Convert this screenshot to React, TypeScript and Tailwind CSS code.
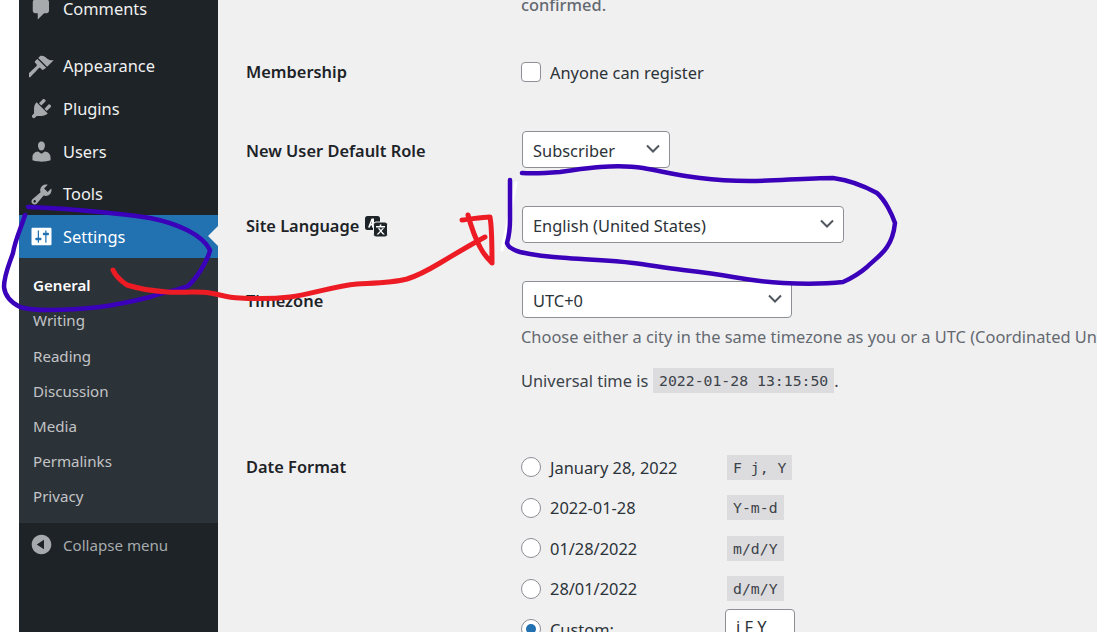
const font = "font-['Noto_Sans',sans-serif]";

const icons = {
  comments: "M5 2h9c1.1 0 2 .9 2 2v7c0 1.1-.9 2-2 2h-2l-5 5v-5H5c-1.1 0-2-.9-2-2V4c0-1.1.9-2 2-2z",
  appearance: "M14.48 11.06L7.41 3.99l1.5-1.5c.5-.56 2.3-.47 3.51.32 1.21.8 1.43 1.28 2.91 2.1 1.18.64 2.45 1.26 4.45.85zm-.71.71L6.7 4.7 4.93 6.47c-.39.39-.39 1.02 0 1.41l1.06 1.06c.39.39.39 1.03 0 1.42-.6.6-6.4 6.11-6.99 6.7-.38.38-.38 1.02 0 1.41l.71.71c.39.39 1.03.39 1.41 0 .6-.6 6.11-6.4 6.7-7 .39-.39 1.03-.39 1.42 0l1.06 1.06c.39.39 1.02.39 1.41 0z",
  plugins: "M13.11 4.36L9.87 7.6 8 5.73l3.24-3.24c.35-.34 1.05-.2 1.56.32.52.51.66 1.21.31 1.55zm-8 1.77l.91-1.12 9.01 9.01-1.19.84c-.71.71-2.63 1.16-3.82 1.16H6.14L4.9 17.26c-.59.59-1.54.59-2.12 0-.59-.58-.59-1.53 0-2.12l1.24-1.24v-3.88c0-1.13.4-3.19 1.09-3.89zm7.26 3.97l3.24-3.24c.34-.35 1.04-.21 1.55.31.52.51.66 1.21.31 1.55l-3.24 3.25z",
  users: "M10 9.25c-2.27 0-2.73-3.44-2.73-3.44C7 4.02 7.82 2 9.97 2c2.16 0 2.98 2.02 2.71 3.81 0 0-.41 3.44-2.68 3.44zm0 2.57L12.72 10c2.39 0 4.52 2.33 4.52 4.53v2.49s-3.65 1.13-7.24 1.13c-3.65 0-7.24-1.13-7.24-1.13v-2.49c0-2.25 1.94-4.48 4.47-4.48z",
  tools: "M16.68 9.77c-1.34 1.34-3.3 1.67-4.95.99l-5.41 6.52c-.99.99-2.59.99-3.58 0s-.99-2.59 0-3.57l6.52-5.42c-.68-1.65-.35-3.61.99-4.95 1.28-1.28 3.12-1.62 4.72-1.06l-2.89 2.89 2.82 2.82 2.86-2.87c.53 1.58.18 3.39-1.08 4.65zM3.81 16.21c.4.39 1.04.39 1.43 0 .4-.4.4-1.04 0-1.43-.39-.4-1.03-.4-1.43 0-.39.39-.39 1.03 0 1.43z",
  settings: "M18 16V4c0-.55-.45-1-1-1H3c-.55 0-1 .45-1 1v12c0 .55.45 1 1 1h14c.55 0 1-.45 1-1zM8 11h1c.55 0 1 .45 1 1s-.45 1-1 1H8v1.5c0 .28-.22.5-.5.5s-.5-.22-.5-.5V13H6c-.55 0-1-.45-1-1s.45-1 1-1h1V5.5c0-.28.22-.5.5-.5s.5.22.5.5V11zm5-2h-1c-.55 0-1-.45-1-1s.45-1 1-1h1V5.5c0-.28.22-.5.5-.5s.5.22.5.5V7h1c.55 0 1 .45 1 1s-.45 1-1 1h-1v5.5c0 .28-.22.5-.5.5s-.5-.22-.5-.5V9z",
  collapse: "M10 2.16c4.33 0 7.84 3.51 7.84 7.84s-3.51 7.84-7.84 7.84S2.16 14.33 2.16 10 5.71 2.16 10 2.16zm2 11.72V6.12L6.18 9.97z",
};

function Dash({ d, className }: { d: string; className: string }) {
  return (
    <svg viewBox="0 0 20 20" className={className} fill="currentColor" aria-hidden="true">
      <path d={d} />
    </svg>
  );
}

function NavItem({ icon, label, h, nudge = true }: { icon: string; label: string; h: string; nudge?: boolean }) {
  return (
    <div className={`flex items-center pl-[10px] shrink-0 ${h}`}>
      <Dash d={icon} className="w-[25px] h-[25px] text-[#a7aaad] shrink-0" />
      <span className={`ml-[9px] text-[#f0f0f1] ${nudge ? "pt-[2px]" : ""}`}>{label}</span>
    </div>
  );
}

function Chevron() {
  return (
    <svg viewBox="0 0 14 9" className="w-[14px] h-[9px] -mt-[2px] text-[#50575e] shrink-0" fill="none" stroke="currentColor" strokeWidth="2">
      <path d="M1 1.5l6 6 6-6" />
    </svg>
  );
}

function Select({ value, w }: { value: string; w: string }) {
  return (
    <div className={`flex items-center justify-between h-[37px] ml-px pl-[10px] pr-[9px] bg-white border border-[#8c8f94] rounded-[4px] text-[#2c3338] ${w}`}>
      <span className="pt-[4px]">{value}</span>
      <Chevron />
    </div>
  );
}

function Code({ children }: { children: string }) {
  return (
    <code className="inline-block h-[25px] leading-[25px] px-[6px] bg-[#dcdcde] text-[#3c434a] text-[14.8px] font-['DejaVu_Sans_Mono',monospace] whitespace-pre">
      {children}
    </code>
  );
}

function DateRow({ label, code, checked }: { label: string; code?: string; checked?: boolean }) {
  return (
    <div className="flex items-center h-[40.5px]">
      <span className="flex items-center justify-center w-[20px] h-[20px] rounded-full border border-[#8c8f94] bg-white shrink-0">
        {checked && <span className="w-[10px] h-[10px] rounded-full bg-[#2271b1]" />}
      </span>
      <span className="ml-[9px] w-[177px] pt-[2px] text-[#2c3338]">{label}</span>
      {code && <Code>{code}</Code>}
      {checked && (
        <div className="-ml-[2px] mb-[3px] w-[70px] h-[37px] pl-[10px] flex items-center bg-white border border-[#8c8f94] rounded-[4px] text-[#2c3338] shrink-0">
          j F Y
        </div>
      )}
    </div>
  );
}

function Annotations() {
  return (
    <svg viewBox="0 0 1097 632" className="absolute inset-0 w-[1097px] h-[632px] pointer-events-none" fill="none" strokeLinecap="round" strokeLinejoin="round" aria-hidden="true">
      <path d="M516 183C512 205 506 228 502 250" stroke="#ffffff" strokeWidth="3" />
      <path
        d="M28 207C60 208 80 210 100 212C120 214 135 215 150 218C165 221 177 225 187 230C197 235 206 242 210 250C208 260 197 278 188 286C178 290 165 292 150 297C130 302 115 305 100 307C82 309 66 310 50 310C35 310 26 309 20 307C10 302 5 296 4 287C4 275 9 265 13 253C15 240 21 228 25 215"
        stroke="#3b00b9"
        strokeWidth="4.5"
      />
      <path
        d="M522 173C535 174 548 173 560 172C575 170 585 168 600 167C615 166 630 166 643 168C665 172 680 176 700 178C715 180 735 181 750 181C775 181 805 178 833 178C848 180 866 187 877 193C885 200 892 214 895 223C894 232 892 240 887 247C882 255 874 260 867 267C860 273 852 278 843 282C825 284 803 284 783 283C765 282 750 280 733 277C716 274 700 272 683 270C665 268 650 265 633 263C610 260 590 260 567 258C550 257 533 255 520 252C513 250 508 247 507 243C509 236 510 228 510 220C510 207 510 193 510 180"
        stroke="#3b00b9"
        strokeWidth="4.5"
      />
      <path
        d="M113 270C116 277 121 281 127 285C140 289 153 291 167 292C182 293 197 291 210 293C219 294 226 298 240 298C257 299 273 299 290 297C312 294 335 286 357 284C375 283 392 283 407 279C420 275 430 269 440 263C455 254 470 245 485 237"
        stroke="#ed1c24"
        strokeWidth="5"
      />
      <path d="M462 220C472 219 482 217 490 217C492 228 492 245 492 263C487 258 483 253 480 247C474 236 471 226 468 215" stroke="#ed1c24" strokeWidth="5" />
    </svg>
  );
}

export default function App() {
  return (
    <div className={`relative flex w-[1097px] h-[632px] overflow-hidden bg-white text-[16.4px] ${font}`}>
      <aside className="ml-[19px] w-[199px] h-full bg-[#1d2327] shrink-0 flex flex-col">
        <div className="-mt-[12px] mb-[13px] shrink-0">
          <NavItem icon={icons.comments} label="Comments" h="h-[43px]" nudge={false} />
        </div>
        <NavItem icon={icons.appearance} label="Appearance" h="h-[43px]" />
        <NavItem icon={icons.plugins} label="Plugins" h="h-[43px]" />
        <NavItem icon={icons.users} label="Users" h="h-[43px]" />
        <NavItem icon={icons.tools} label="Tools" h="h-[42px]" nudge={false} />
        <div className="relative flex items-center h-[43px] pl-[10px] bg-[#2271b1] shrink-0">
          <Dash d={icons.settings} className="w-[25px] h-[25px] text-white shrink-0" />
          <span className="ml-[9px] pt-[2px] text-white">Settings</span>
          <span className="absolute right-0 top-[11px] border-y-[10px] border-r-[10px] border-y-transparent border-r-[#f0f0f1]" />
        </div>
        <div className="h-[265px] pt-[10px] pl-[14px] bg-[#2c3338] text-[15.1px] text-[#c3c4c7] shrink-0">
          <div className="flex items-center h-[35.2px] font-semibold text-white">General</div>
          <div className="flex items-center h-[35.2px]">Writing</div>
          <div className="flex items-center h-[35.2px]">Reading</div>
          <div className="flex items-center h-[35.2px]">Discussion</div>
          <div className="flex items-center h-[35.2px]">Media</div>
          <div className="flex items-center h-[35.2px]">Permalinks</div>
          <div className="flex items-center h-[35.2px]">Privacy</div>
        </div>
        <div className="flex items-center h-[41px] mt-[1px] pl-[10px] text-[#a7aaad] text-[15.1px] shrink-0">
          <Dash d={icons.collapse} className="w-[25px] h-[25px] shrink-0" />
          <span className="ml-[9px] pt-[2px]">Collapse menu</span>
        </div>
      </aside>

      <main className="flex-1 min-w-0 bg-[#f0f0f1] pl-[28px] whitespace-nowrap overflow-hidden">
        <div className="-mt-[8px] h-[26px] pl-[275px] flex items-center font-medium text-[#646970]">confirmed.</div>

        <div className="mt-[35px] h-[38px] flex items-center">
          <div className="w-[275px] font-semibold text-[#1d2327]">Membership</div>
          <span className="w-[20px] h-[20px] rounded-[4px] border border-[#8c8f94] bg-white" />
          <span className="ml-[9px] pt-[2px] text-[#2c3338]">Anyone can register</span>
        </div>

        <div className="mt-[40px] h-[37px] flex items-center">
          <div className="w-[275px] pt-[4px] font-semibold text-[#1d2327]">New User Default Role</div>
          <Select value="Subscriber" w="w-[148px]" />
        </div>

        <div className="mt-[38px] h-[37px] flex items-center">
          <div className="w-[275px] pt-[4px] flex items-center font-semibold text-[#1d2327]">
            Site Language
            <svg viewBox="0 0 24 24" className="ml-[5px] w-[24px] h-[24px]" aria-hidden="true">
              <rect x="1" y="2" width="15" height="14" rx="2.5" fill="#1d2327" />
              <path d="M4 13.5L7.5 4.5h2.5v9h-2v-2H6.6l-.7 2zM7.3 9.7H8V7z" fill="#ffffff" />
              <rect x="9.5" y="8" width="14" height="15" rx="2.5" fill="#1d2327" stroke="#f0f0f1" strokeWidth="1" />
              <path d="M12 12h9v1.6h-9zM15.7 10.5h1.6v2h-1.6zM12.5 20.5l3.5-3.6-2.2-2.6h1.8l1.3 1.6 1.4-1.6h1.8L17.6 17l3.3 3.5h-2l-2.2-2.4-2.2 2.4z" fill="#ffffff" />
            </svg>
          </div>
          <Select value="English (United States)" w="w-[322px]" />
        </div>

        <div className="mt-[38px] h-[37px] flex items-center">
          <div className="w-[275px] pt-[4px] font-semibold text-[#1d2327]">Timezone</div>
          <Select value="UTC+0" w="w-[270px]" />
        </div>

        <div className="mt-[7px] h-[24px] pl-[275px] flex items-center text-[#646970]">
          Choose either a city in the same timezone as you or a UTC (Coordinated Universal Time) offset.
        </div>

        <div className="mt-[19px] h-[25px] pl-[275px] flex items-center text-[#3c434a]">
          <span className="w-[132px] pt-[2px]">Universal time is</span>
          <Code>2022-01-28 13:15:50</Code>
          <span className="pt-[2px]">.</span>
        </div>

        <div className="mt-[54px] flex items-start">
          <div className="w-[275px] h-[40.5px] flex items-center font-semibold text-[#1d2327]">Date Format</div>
          <div>
            <DateRow label="January 28, 2022" code="F j, Y" />
            <DateRow label="2022-01-28" code="Y-m-d" />
            <DateRow label="01/28/2022" code="m/d/Y" />
            <DateRow label="28/01/2022" code="d/m/Y" />
            <DateRow label="Custom:" checked />
          </div>
        </div>
      </main>

      <Annotations />
    </div>
  );
}
